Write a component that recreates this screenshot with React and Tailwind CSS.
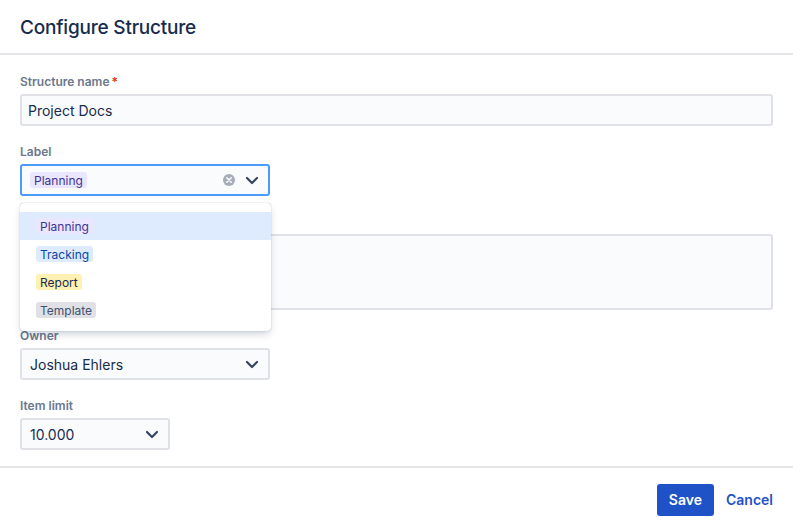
import React from "react";

const Chevron = () => (
  <svg width="24" height="24" viewBox="0 0 24 24" className="shrink-0">
    <path d="M7 10l5 5 5-5" fill="none" stroke="#344563" strokeWidth="2.2" strokeLinecap="round" strokeLinejoin="round" />
  </svg>
);

const Clear = () => (
  <svg width="14" height="14" viewBox="0 0 14 14" className="shrink-0">
    <circle cx="7" cy="7" r="6" fill="#A5ADBA" />
    <path d="M4.8 4.8l4.4 4.4M9.2 4.8l-4.4 4.4" stroke="#FAFBFC" strokeWidth="1.6" strokeLinecap="round" />
  </svg>
);

const Label = ({ children, required }) => (
  <div className="h-[18px] pt-[2px] mb-[4px] text-[12px] leading-4 font-semibold text-[#6B778C] flex items-center">
    {children}
    {required && <span className="text-[#DE350B] ml-[2px]">*</span>}
  </div>
);

const Chip = ({ children, cls }) => (
  <span className={`inline-flex items-center h-4 pt-[1px] px-1 rounded-[3px] text-[12px] leading-4 ${cls}`}>{children}</span>
);

export default function App() {
  return (
    <div
      className="w-[793px] h-[529px] bg-white flex flex-col text-[#172B4D] overflow-hidden"
      style={{ fontFamily: "Inter, 'Noto Sans', sans-serif" }}
    >
      <div className="h-[55px] shrink-0 px-5 pt-[3px] flex items-center border-b-2 border-[#E4E5E9]">
        <h1 className="text-[19px] font-medium text-[#172B4D] tracking-[-0.2px]">Configure Structure</h1>
      </div>

      <div className="px-5 pt-[17px] flex flex-col">
        <Label required>Structure name</Label>
        <div className="h-8 border-2 border-[#DFE1E6] bg-[#FAFBFC] rounded-[3px] flex items-center px-[6px] pt-[1px] text-[14px]">
          Project Docs
        </div>

        <div className="mt-4 relative">
          <Label>Label</Label>
          <div className="w-[250px] h-8 border-2 border-[#4C9AFF] bg-[#FAFBFC] rounded-[3px] flex items-center pl-2 pr-1">
            <Chip cls="bg-[#EAE6FF] text-[#403294]">Planning</Chip>
            <div className="flex-1" />
            <Clear />
            <div className="ml-[4px]">
              <Chevron />
            </div>
          </div>

          <div className="absolute left-0 top-[61px] w-[251px] bg-white rounded-[4px] pt-[9px] pb-[7px] z-10 shadow-[0_4px_8px_-2px_rgba(9,30,66,0.25),0_0_1px_rgba(9,30,66,0.45)]">
            <div className="h-7 flex items-center pl-4 bg-[#DEEBFF]">
              <Chip cls="bg-[#EAE6FF] text-[#403294]">Planning</Chip>
            </div>
            <div className="h-7 flex items-center pl-4">
              <Chip cls="bg-[#DEEBFF] text-[#0747A6]">Tracking</Chip>
            </div>
            <div className="h-7 flex items-center pl-4">
              <Chip cls="bg-[#FFF0B3] text-[#172B4D]">Report</Chip>
            </div>
            <div className="h-7 flex items-center pl-4">
              <Chip cls="bg-[#DFE1E6] text-[#42526E]">Template</Chip>
            </div>
          </div>
        </div>

        <div className="mt-4">
          <Label>Description</Label>
          <div className="h-[76px] border-2 border-[#DFE1E6] bg-[#FAFBFC] rounded-[3px]" />
        </div>

        <div className="mt-4">
          <Label>Owner</Label>
          <div className="w-[250px] h-8 border-2 border-[#DFE1E6] bg-[#FAFBFC] rounded-[3px] flex items-center pl-2 pr-1 text-[14px]">
            <span className="flex-1 pt-[1px]">Joshua Ehlers</span>
            <Chevron />
          </div>
        </div>

        <div className="mt-4">
          <Label>Item limit</Label>
          <div className="w-[150px] h-8 border-2 border-[#DFE1E6] bg-[#FAFBFC] rounded-[3px] flex items-center pl-2 pr-1 text-[14px]">
            <span className="flex-1 pt-[1px]">10.000</span>
            <Chevron />
          </div>
        </div>
      </div>

      <div className="mt-4 border-t-2 border-[#E4E5E9] flex-1 flex items-center justify-end pr-[8px] pt-[2px]">
        <button className="h-8 px-3 rounded-[3px] bg-[#1F52C7] text-white text-[14px] font-semibold">Save</button>
        <button className="h-8 px-3 text-[14px] font-semibold text-[#1F52C7]">Cancel</button>
      </div>
    </div>
  );
}
